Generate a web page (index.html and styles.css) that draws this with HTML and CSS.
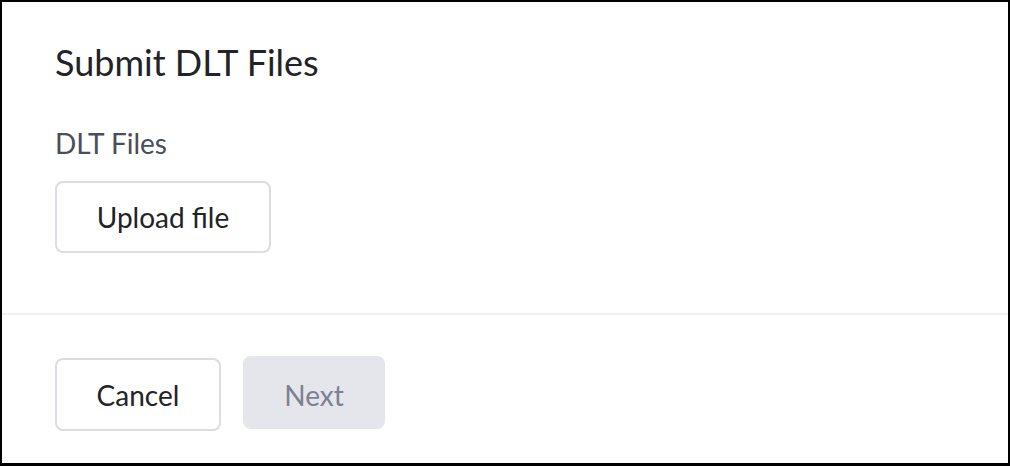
FILE: index.html
```html
<!DOCTYPE html>
<html>
<head>
<meta charset="utf-8">
<link rel="stylesheet" href="styles.css">
</head>
<body>
<div class="dialog">
  <div class="body">
    <h1 class="title">Submit DLT Files</h1>
    <div class="label">DLT Files</div>
    <button class="btn btn-outline upload">Upload file</button>
  </div>
  <div class="footer">
    <button class="btn btn-outline cancel">Cancel</button>
    <button class="btn btn-disabled next">Next</button>
  </div>
</div>
</body>
</html>
```
FILE: styles.css
```css
* { box-sizing: border-box; }
html, body { margin: 0; padding: 0; background: #fff; }
body { font-family: Lato, "Noto Sans", sans-serif; }
.dialog {
  width: 1010px;
  height: 466px;
  border: 2px solid #000;
  border-bottom-width: 3px;
  display: flex;
  flex-direction: column;
  background: #fff;
}
.body {
  padding: 38px 53px 0;
  height: 313px;
  flex: none;
  border-bottom: 2px solid #f0f0f5;
}
.title {
  margin: 0;
  font-size: 36px;
  line-height: 44px;
  font-weight: 400;
  color: #222326;
}
.label {
  margin-top: 42px;
  font-size: 28px;
  line-height: 34px;
  color: #4b4d5a;
}
.btn {
  font-family: Lato, "Noto Sans", sans-serif;
  font-size: 28px;
  border-radius: 8px;
  display: flex;
  align-items: center;
  justify-content: center;
  padding: 0;
}
.btn-outline {
  background: #fff;
  border: 2px solid #dcdce2;
  color: #222326;
}
.upload {
  margin-top: 21px;
  width: 216px;
  height: 72px;
}
.footer {
  display: flex;
  align-items: flex-start;
  gap: 22px;
  padding: 41px 53px 0;
}
.cancel {
  margin-top: 2px;
  width: 166px;
  height: 73px;
}
.btn-disabled {
  background: #e5e6eb;
  border: none;
  color: #7c8090;
  width: 142px;
  height: 73px;
  padding-top: 4px;
}
```
